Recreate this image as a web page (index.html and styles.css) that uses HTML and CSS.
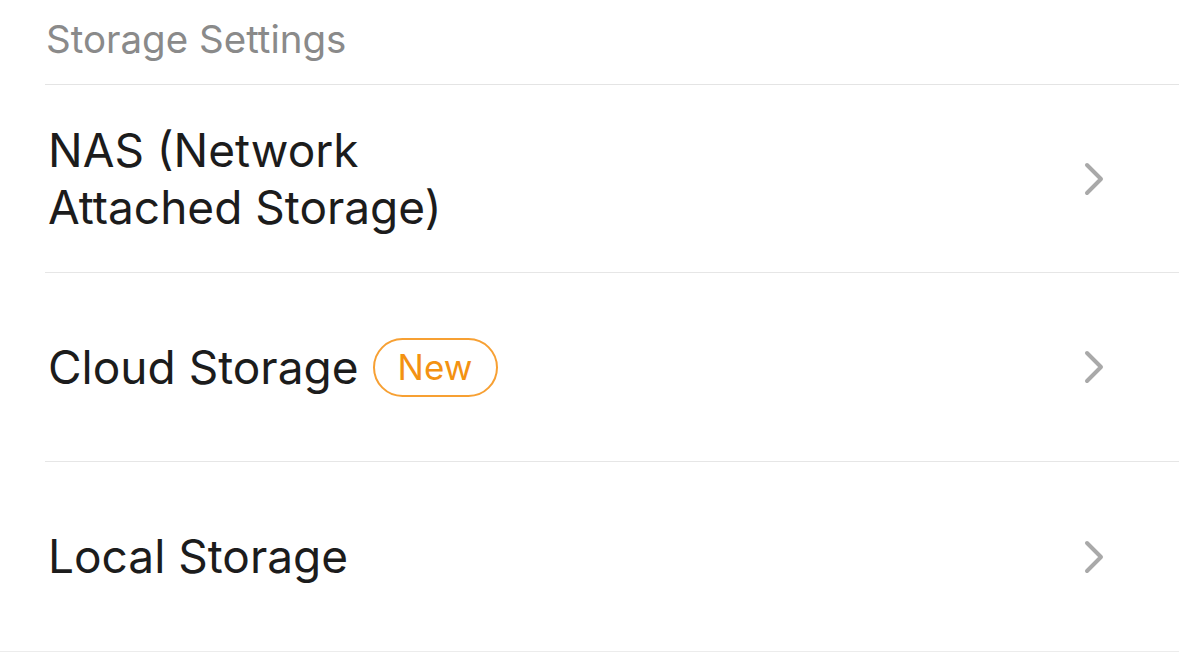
FILE: index.html
```html
<!DOCTYPE html>
<html>
<head>
<meta charset="utf-8">
<link rel="stylesheet" href="styles.css">
</head>
<body>
<div class="page">
  <div class="section-header">Storage Settings</div>
  <div class="list">
    <div class="row">
      <div class="label label-wrap">NAS (Network Attached Storage)</div>
      <svg class="chevron" width="24" height="36" viewBox="0 0 24 36"><path d="M4 4 L18 18 L4 32" fill="none" stroke="#a9a9a9" stroke-width="4" stroke-linecap="round" stroke-linejoin="round"/></svg>
    </div>
    <div class="row">
      <div class="label">Cloud Storage <span class="badge">New</span></div>
      <svg class="chevron" width="24" height="36" viewBox="0 0 24 36"><path d="M4 4 L18 18 L4 32" fill="none" stroke="#a9a9a9" stroke-width="4" stroke-linecap="round" stroke-linejoin="round"/></svg>
    </div>
    <div class="row">
      <div class="label">Local Storage</div>
      <svg class="chevron" width="24" height="36" viewBox="0 0 24 36"><path d="M4 4 L18 18 L4 32" fill="none" stroke="#a9a9a9" stroke-width="4" stroke-linecap="round" stroke-linejoin="round"/></svg>
    </div>
  </div>
</div>
</body>
</html>
```
FILE: styles.css
```css
html, body {
  margin: 0;
  padding: 0;
  background: #ffffff;
}
.page {
  font-family: Inter, "Noto Sans", sans-serif;
}
.section-header {
  height: 85px;
  box-sizing: border-box;
  margin-left: 45px;
  border-bottom: 1px solid #e4e4e4;
  font-size: 38.5px;
  line-height: 78px;
  color: #8a8a8a;
  padding-left: 1px;
}
.list {
  border-bottom: 1px solid #ececec;
}
.row {
  height: 189px;
  box-sizing: border-box;
  margin-left: 45px;
  border-bottom: 1px solid #e6e6e6;
  display: flex;
  align-items: center;
  justify-content: space-between;
  padding-right: 72px;
  padding-left: 3px;
}
.row:first-child {
  height: 188px;
}
.row:last-child {
  border-bottom: none;
}
.label {
  font-size: 46px;
  line-height: 57px;
  color: #1c1c1c;
  display: flex;
  align-items: center;
}
.label-wrap {
  display: block;
  max-width: 440px;
}
.badge {
  display: inline-flex;
  align-items: center;
  justify-content: center;
  box-sizing: border-box;
  height: 59px;
  width: 125px;
  margin-left: 14px;
  border: 2px solid #f7a033;
  border-radius: 30px;
  font-size: 35px;
  color: #f39212;
}
.chevron {
  display: block;
}
```
